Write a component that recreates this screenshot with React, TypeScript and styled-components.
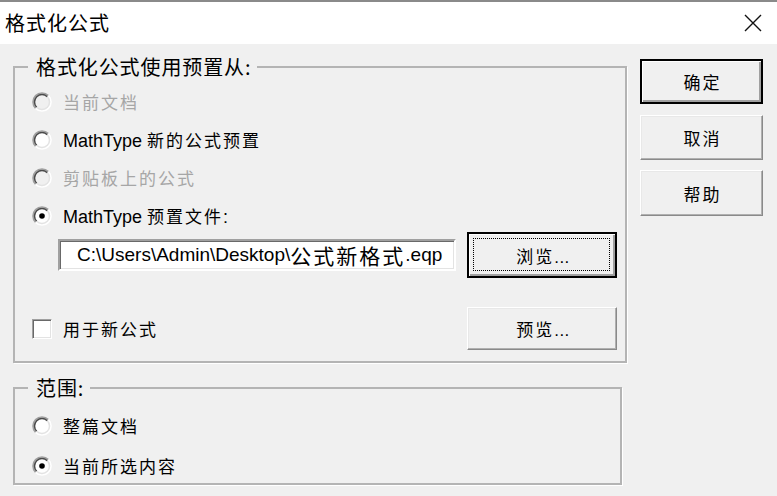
import React from "react";
import styled, { createGlobalStyle, css } from "styled-components";

const Global = createGlobalStyle`
  html, body { margin: 0; padding: 0; background: #f0f0f0; }
  body {
    width: 777px; height: 496px; overflow: hidden;
    font-family: "Liberation Sans", "Noto Sans CJK SC", sans-serif;
  }
  * { box-sizing: border-box; }
`;

const Window = styled.div`
  width: 777px;
  height: 496px;
  display: flex;
  flex-direction: column;
  background: #f0f0f0;
`;

const TitleBar = styled.div`
  height: 44px;
  flex: none;
  background: #fff;
  border-top: 2px solid #8a8a8a;
  display: flex;
  align-items: center;
  justify-content: space-between;
  padding: 0 15px 0 5px;
`;

const Title = styled.span`
  font-family: "Noto Sans CJK SC", sans-serif;
  font-size: 20px;
  letter-spacing: 1px;
  line-height: 1;
  color: #000;
`;

const CloseIcon = styled.svg`
  width: 18px;
  height: 18px;
  display: block;
`;

const Body = styled.div`
  flex: 1;
  display: flex;
  align-items: flex-start;
  gap: 13px;
  padding: 12px 0 0 13px;
`;

const LeftCol = styled.div`
  display: flex;
  flex-direction: column;
  gap: 14px;
`;

const RightCol = styled.div`
  margin-top: 3px;
  display: flex;
  flex-direction: column;
  gap: 10.5px;
`;

const Group = styled.fieldset<{ $w: number; $pt: number; $pb: number }>`
  width: ${(p) => p.$w}px;
  min-width: 0;
  margin: 0;
  padding: ${(p) => p.$pt}px 8px ${(p) => p.$pb}px 13px;
  border: 2px solid #b4b4b4;
  box-shadow: 1px 1px 0 #fff;
`;

const Legend = styled.legend`
  padding: 0 6px 0 8px;
  font-family: "Noto Sans CJK SC", sans-serif;
  font-size: 20px;
  letter-spacing: 0.9px;
  line-height: 22px;
  color: #000;
`;

const Inner = styled.div`
  padding-left: 4px;
  display: flex;
  flex-direction: column;
`;

const RadioList = styled.div<{ $gap: number }>`
  display: flex;
  flex-direction: column;
  gap: ${(p) => p.$gap}px;
`;

const OptionRow = styled.div`
  height: 22px;
  display: flex;
  align-items: center;
  gap: 11px;
`;

const Label = styled.span<{ $disabled?: boolean }>`
  font-family: "Noto Sans CJK SC", sans-serif;
  font-size: 17px;
  letter-spacing: 2px;
  line-height: 22px;
  white-space: nowrap;
  color: ${(p) => (p.$disabled ? "#a6a6a6" : "#000")};
`;

const Latin = styled.span<{ $size?: number }>`
  font-family: "Liberation Sans", sans-serif;
  font-size: ${(p) => p.$size ?? 18}px;
  letter-spacing: 0;
`;

const RadioSvg = styled.svg`
  width: 20px;
  height: 20px;
  flex: none;
  display: block;
`;

const FileRow = styled.div`
  margin-top: 5px;
  padding-left: 26px;
  display: flex;
  align-items: center;
  gap: 11px;
`;

const TextBox = styled.div`
  width: 398px;
  height: 32px;
  background: #fff;
  border: 2px solid;
  border-color: #a0a0a0 #fff #fff #a0a0a0;
  box-shadow: inset 1px 1px 0 #696969, inset -1px -1px 0 #e3e3e3;
  display: flex;
  align-items: center;
  padding-left: 17px;
  white-space: nowrap;
  overflow: hidden;
  color: #000;
`;

const BoxText = styled.span`
  font-family: "Noto Sans CJK SC", sans-serif;
  font-size: 21px;
  letter-spacing: 2px;
`;

const CheckRow = styled.div`
  margin-top: 29px;
  display: flex;
  align-items: center;
  justify-content: space-between;
`;

const CheckLabel = styled.div`
  display: flex;
  align-items: center;
  gap: 11px;
`;

const CheckBox = styled.span`
  width: 20px;
  height: 20px;
  flex: none;
  background: #fff;
  border: 1px solid;
  border-color: #a0a0a0 #fff #fff #a0a0a0;
  box-shadow: inset 1px 1px 0 #696969, inset -1px -1px 0 #e3e3e3;
`;

const Button = styled.button<{ $w: number; $h: number; $default?: boolean; $focus?: boolean }>`
  position: relative;
  width: ${(p) => p.$w}px;
  height: ${(p) => p.$h}px;
  flex: none;
  padding: 0 0 0 2px;
  margin: 0;
  background: #f0f0f0;
  font-family: "Noto Sans CJK SC", sans-serif;
  font-size: 17px;
  letter-spacing: 2px;
  color: #000;
  border: 1px solid;
  border-color: #fff #8a8a8a #8a8a8a #fff;
  box-shadow: inset -1px -1px 0 #b0b0b0, inset 1px 1px 0 #e8e8e8;
  ${(p) =>
    p.$default &&
    css`
      border: 2px solid #000;
      box-shadow: inset 1px 1px 0 #fff, inset -2px -2px 0 #a0a0a0;
    `}
  ${(p) =>
    p.$focus &&
    css`
      &::after {
        content: "";
        position: absolute;
        inset: 4px 5px 5px 4px;
        border: 1px dotted #000;
      }
    `}
`;

const Dots = styled.span`
  font-family: "Liberation Sans", sans-serif;
  letter-spacing: 0.5px;
`;

function Radio({ checked, disabled }: { checked?: boolean; disabled?: boolean }) {
  const r1 = 9;
  const r2 = 7.5;
  const d1 = r1 * Math.SQRT1_2;
  const d2 = r2 * Math.SQRT1_2;
  return (
    <RadioSvg viewBox="0 0 20 20">
      <circle cx="10" cy="10" r="8" fill={disabled ? "#f0f0f0" : "#fff"} />
      <path
        d={`M ${10 - d1} ${10 + d1} A ${r1} ${r1} 0 0 1 ${10 + d1} ${10 - d1}`}
        stroke="#a0a0a0"
        strokeWidth="1.6"
        fill="none"
      />
      <path
        d={`M ${10 + d1} ${10 - d1} A ${r1} ${r1} 0 0 1 ${10 - d1} ${10 + d1}`}
        stroke="#ffffff"
        strokeWidth="1.6"
        fill="none"
      />
      <path
        d={`M ${10 - d2} ${10 + d2} A ${r2} ${r2} 0 0 1 ${10 + d2} ${10 - d2}`}
        stroke="#4a4a4a"
        strokeWidth="1.5"
        fill="none"
      />
      <path
        d={`M ${10 + d2} ${10 - d2} A ${r2} ${r2} 0 0 1 ${10 - d2} ${10 + d2}`}
        stroke="#e3e3e3"
        strokeWidth="1.5"
        fill="none"
      />
      {checked && <circle cx="10" cy="10" r="2.8" fill="#000" />}
    </RadioSvg>
  );
}

export default function App() {
  return (
    <Window>
      <Global />
      <TitleBar>
        <Title>格式化公式</Title>
        <CloseIcon viewBox="0 0 18 18">
          <path d="M1 1 L17 17 M17 1 L1 17" stroke="#111" strokeWidth="1.4" fill="none" />
        </CloseIcon>
      </TitleBar>
      <Body>
        <LeftCol>
          <Group $w={614} $pt={13} $pb={11}>
            <Legend>格式化公式使用预置从:</Legend>
            <Inner>
              <RadioList $gap={16}>
                <OptionRow>
                  <Radio disabled />
                  <Label $disabled>当前文档</Label>
                </OptionRow>
                <OptionRow>
                  <Radio />
                  <Label>
                    <Latin>MathType </Latin>新的公式预置
                  </Label>
                </OptionRow>
                <OptionRow>
                  <Radio disabled />
                  <Label $disabled>剪贴板上的公式</Label>
                </OptionRow>
                <OptionRow>
                  <Radio checked />
                  <Label>
                    <Latin>MathType </Latin>预置文件<Latin>:</Latin>
                  </Label>
                </OptionRow>
              </RadioList>
              <FileRow>
                <TextBox>
                  <Latin $size={19}>C:\Users\Admin\Desktop\</Latin>
                  <BoxText>公式新格式</BoxText>
                  <Latin $size={19}>.eqp</Latin>
                </TextBox>
                <Button $w={150} $h={46} $default $focus>
                  浏览<Dots>...</Dots>
                </Button>
              </FileRow>
              <CheckRow>
                <CheckLabel>
                  <CheckBox />
                  <Label>用于新公式</Label>
                </CheckLabel>
                <Button $w={150} $h={43}>
                  预览<Dots>...</Dots>
                </Button>
              </CheckRow>
            </Inner>
          </Group>
          <Group $w={609} $pt={16} $pb={6}>
            <Legend>范围:</Legend>
            <Inner>
              <RadioList $gap={18}>
                <OptionRow>
                  <Radio />
                  <Label>整篇文档</Label>
                </OptionRow>
                <OptionRow>
                  <Radio checked />
                  <Label>当前所选内容</Label>
                </OptionRow>
              </RadioList>
            </Inner>
          </Group>
        </LeftCol>
        <RightCol>
          <Button $w={123} $h={45} $default>
            确定
          </Button>
          <Button $w={123} $h={45}>
            取消
          </Button>
          <Button $w={123} $h={46}>
            帮助
          </Button>
        </RightCol>
      </Body>
    </Window>
  );
}
